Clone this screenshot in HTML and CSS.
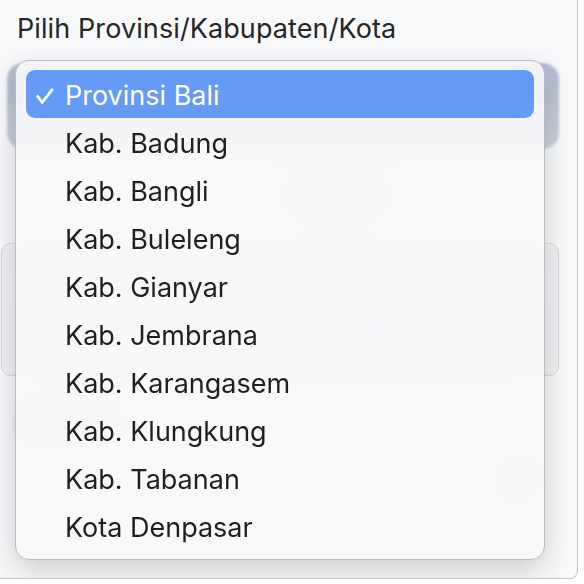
FILE: index.html
```html
<!DOCTYPE html>
<html>

	<head>
		<meta charset="UTF-8">
		<title>Pilih Provinsi</title>
		<link rel="stylesheet" href="styles.css">
	</head>

	<body>
		<div class="panel">
			<div class="label">Pilih Provinsi/Kabupaten/Kota</div>

			<!-- isi halaman di belakang menu, tampak kabur -->
			<div class="behind">
				<div class="select-box"></div>
				<div class="row-ghost">
					<span class="blob blob-dark"></span>
				</div>
				<div class="card">
					<span class="blob blob-line"></span>
					<span class="blob blob-round"></span>
					<span class="blob blob-round2"></span>
					<span class="blob blob-blue"></span>
				</div>
				<div class="row-ghost2">
					<span class="blob blob-label"></span>
					<span class="blob blob-blue2"></span>
				</div>
			</div>

			<ul class="menu">
				<li class="item selected">
					<svg class="check" width="18" height="17" viewBox="0 0 18 17">
						<polyline points="1.8,8.5 6.2,14.5 16,1.8" fill="none" stroke="#ffffff" stroke-width="2.8" stroke-linecap="round" stroke-linejoin="round" />
					</svg>
					Provinsi Bali
				</li>
				<li class="item">Kab. Badung</li>
				<li class="item">Kab. Bangli</li>
				<li class="item">Kab. Buleleng</li>
				<li class="item">Kab. Gianyar</li>
				<li class="item">Kab. Jembrana</li>
				<li class="item">Kab. Karangasem</li>
				<li class="item">Kab. Klungkung</li>
				<li class="item">Kab. Tabanan</li>
				<li class="item">Kota Denpasar</li>
			</ul>
		</div>
	</body>

</html>
```

FILE: styles.css
```css
html,
body {
	margin: 0;
	background: #ffffff;
}

body {
	font-family: Inter, "Noto Sans", "Liberation Sans", sans-serif;
	color: #222222;
}

.panel {
	position: relative;
	width: 578px;
	height: 579px;
	box-sizing: border-box;
	background: #f8f9fb;
	border-right: 1px solid #c4c4c8;
	border-bottom: 1px solid #c4c4c8;
	border-bottom-right-radius: 8px;
	overflow: hidden;
}

.label {
	padding: 13px 0 0 17px;
	font-size: 27px;
	line-height: 32px;
	letter-spacing: 0.1px;
	color: #262626;
}

.behind {
	display: flex;
	flex-direction: column;
	padding: 18px 18px 0 1px;
}

.select-box {
	height: 86px;
	margin: 0 0 0 6px;
	border-radius: 16px;
	background: linear-gradient(#b2bed2, #c9d2df);
	filter: blur(1px);
}

.row-ghost {
	position: relative;
	height: 94px;
}

.card {
	position: relative;
	height: 131px;
	border: 1px solid #d5d6da;
	border-radius: 10px;
	background: #f1f2f4;
}

.row-ghost2 {
	position: relative;
	height: 140px;
}

.blob {
	position: absolute;
	display: block;
	border-radius: 20px;
	filter: blur(9px);
}

.blob-dark {
	left: 290px;
	top: 40px;
	width: 90px;
	height: 14px;
	background: #c4c6cb;
}

.blob-line {
	left: 20px;
	top: 36px;
	width: 330px;
	height: 16px;
	background: #e2e4e8;
}

.blob-round {
	left: 440px;
	top: 20px;
	width: 50px;
	height: 50px;
	background: #e0e2e6;
}

.blob-round2 {
	left: 500px;
	top: 28px;
	width: 32px;
	height: 32px;
	background: #cfd1d6;
}

.blob-blue {
	left: 360px;
	top: 70px;
	width: 30px;
	height: 30px;
	background: #b8c8f0;
}

.blob-label {
	left: 20px;
	top: 38px;
	width: 90px;
	height: 16px;
	background: #b8babf;
}

.blob-blue2 {
	left: 505px;
	top: 90px;
	width: 24px;
	height: 24px;
	background: #c4d0f0;
}

/* menu pilihan yang sedang terbuka */
.menu {
	position: absolute;
	left: 15px;
	top: 60px;
	width: 530px;
	height: 500px;
	box-sizing: border-box;
	margin: 0;
	padding: 9px 10px;
	list-style: none;
	background: rgba(247, 248, 250, 0.9);
	backdrop-filter: blur(12px);
	border: 1px solid #b9babd;
	border-radius: 14px;
	box-shadow: 0 10px 28px rgba(0, 0, 0, 0.18);
}

.item {
	position: relative;
	height: 48px;
	box-sizing: border-box;
	padding: 4px 0 0 39px;
	border-radius: 9px;
	font-size: 27px;
	line-height: 44px;
	color: #1f1f1f;
	white-space: nowrap;
}

.selected {
	background: #659bf6;
	color: #ffffff;
}

.check {
	position: absolute;
	left: 10px;
	top: 18px;
}
```
